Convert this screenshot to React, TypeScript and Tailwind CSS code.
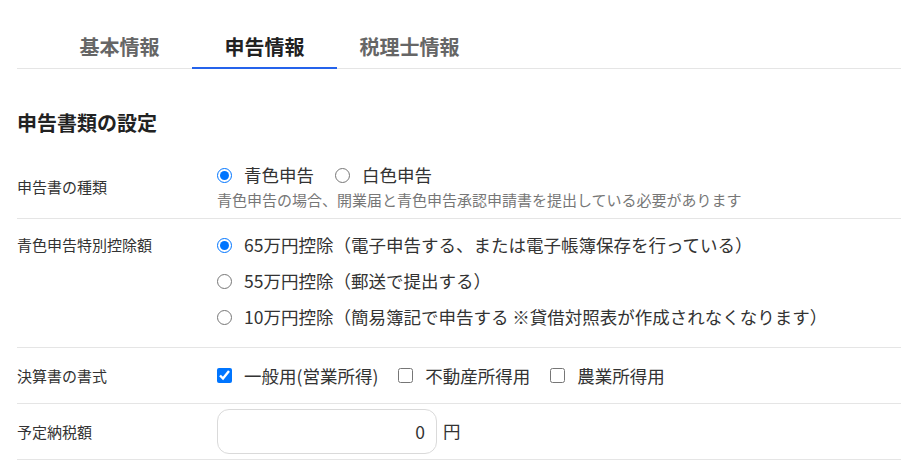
import React from "react";

function Radio({ checked, label, name, className = "" }: { checked?: boolean; label: string; name: string; className?: string }) {
  return (
    <label className={`flex items-center gap-[12px] ${className}`}>
      <input type="radio" name={name} defaultChecked={checked} className="m-0 w-[15px] h-[15px] shrink-0" />
      <span>{label}</span>
    </label>
  );
}

function Check({ checked, label, className = "" }: { checked?: boolean; label: string; className?: string }) {
  return (
    <label className={`flex items-center gap-[12px] ${className}`}>
      <input type="checkbox" defaultChecked={checked} className="m-0 w-[15px] h-[15px] shrink-0" />
      <span>{label}</span>
    </label>
  );
}

export default function App() {
  const tabs = ["基本情報", "申告情報", "税理士情報"];
  return (
    <div className="w-[901px] h-[465px] overflow-hidden bg-white pl-[17px] pt-[27px] font-['Noto_Sans_CJK_JP',sans-serif] text-[#333]">
      <div className="flex border-b border-[#e5e5e5] pl-[30px]">
        {tabs.map((t, i) => (
          <div
            key={t}
            className={
              i === 1
                ? "w-[145px] h-[42px] -mb-px flex items-center justify-center text-[20px] font-bold border-b-2 border-[#2563eb] text-[#222]"
                : "w-[145px] h-[42px] -mb-px flex items-center justify-center text-[20px] font-bold border-b-2 border-transparent text-[#666]"
            }
          >
            {t}
          </div>
        ))}
      </div>

      <h2 className="mt-[40px] text-[20px] font-bold leading-[28px] text-[#222]">申告書類の設定</h2>

      <div className="mt-[18px]">
        <div className="flex border-b border-[#e5e5e5]">
          <div className="w-[200px] shrink-0 self-center text-[15px] leading-6">申告書の種類</div>
          <div className="pt-[8px] pb-[8px]">
            <div className="flex items-center h-6 text-[17.5px] leading-6">
              <Radio name="kind" checked label="青色申告" className="mr-[21px]" />
              <Radio name="kind" label="白色申告" />
            </div>
            <div className="mt-[3px] text-[15px] leading-[20px] text-[#777]">
              青色申告の場合、開業届と青色申告承認申請書を提出している必要があります
            </div>
          </div>
        </div>

        <div className="flex items-start border-b border-[#e5e5e5] pt-[14px] pb-[18px]">
          <div className="w-[200px] shrink-0 text-[15px] leading-6">青色申告特別控除額</div>
          <div className="flex flex-col gap-3 text-[17.5px] leading-6">
            <Radio name="deduct" checked label="65万円控除（電子申告する、または電子帳簿保存を行っている）" />
            <Radio name="deduct" label="55万円控除（郵送で提出する）" />
            <Radio name="deduct" label="10万円控除（簡易簿記で申告する ※貸借対照表が作成されなくなります）" />
          </div>
        </div>

        <div className="flex items-center h-[56px] border-b border-[#e5e5e5]">
          <div className="w-[200px] shrink-0 text-[15px] leading-6">決算書の書式</div>
          <div className="flex items-center text-[17.5px] leading-6">
            <Check checked label="一般用(営業所得)" className="mr-5" />
            <Check label="不動産所得用" className="mr-5" />
            <Check label="農業所得用" />
          </div>
        </div>

        <div className="flex items-center h-[56px] border-b border-[#e5e5e5]">
          <div className="w-[200px] shrink-0 text-[15px] leading-6">予定納税額</div>
          <div className="flex items-center text-[17.5px]">
            <input
              type="text"
              defaultValue="0"
              readOnly
              className="w-[220px] h-[45px] rounded-[12px] border border-[#dadada] text-right pr-[11px] text-[17.5px] text-[#333] outline-none"
            />
            <span className="ml-[6px]">円</span>
          </div>
        </div>
      </div>
    </div>
  );
}
